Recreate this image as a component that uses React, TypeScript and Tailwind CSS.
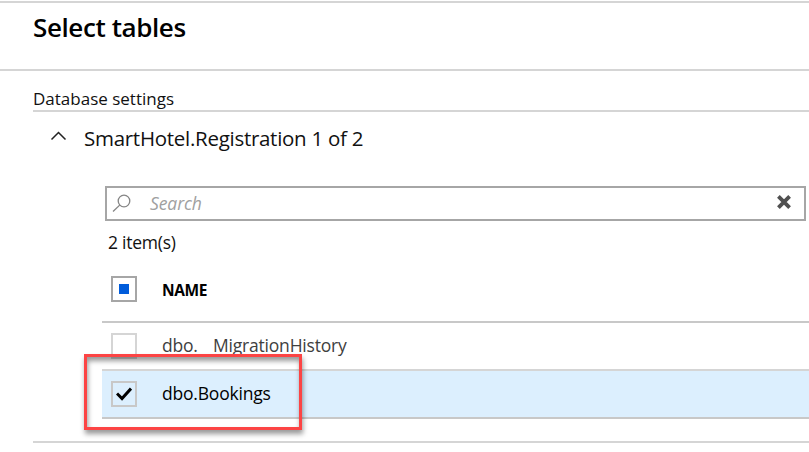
import type { ReactNode } from "react";

function Box({ children, tone }: { children?: ReactNode; tone: string }) {
  return (
    <span className={`flex h-[26px] w-[26px] shrink-0 items-center justify-center border-2 ${tone}`}>
      {children}
    </span>
  );
}

export default function App() {
  return (
    <main className="relative h-[452px] w-[809px] overflow-hidden bg-white pt-px font-['Open_Sans','Noto_Sans',sans-serif] whitespace-pre text-[#111]">
      <header className="h-[70px] border-y-2 border-[#d5d5d5] pl-[33px]">
        <h1 className="pt-[6px] text-[26px] leading-[36px] font-semibold tracking-[-0.4px] text-black">Select tables</h1>
      </header>
      <section className="ml-[33px] h-[372px] border-b-2 border-[#d5d5d5]">
        <h2 className="h-[41px] border-b-2 border-[#d5d5d5] pt-[16px] text-[17px] leading-[24px]">Database settings</h2>
        <div className="flex h-[74px] pl-[17px]">
          <svg className="mt-[19px] h-[10px] w-[17px]" viewBox="0 0 17 10" fill="none" stroke="#222" strokeWidth="1.5">
            <path d="M1.5 8.5 8.5 1.5 15.5 8.5" />
          </svg>
          <h3 className="ml-[17px] pt-[11px] text-[20.5px] leading-[30px] tracking-[-0.28px]">SmartHotel.Registration 1 of 2</h3>
        </div>
        <div className="ml-[72px] flex h-[35px] w-[701px] items-center border-2 border-[#a6a6a6] text-[17.5px] text-[#a0a0a0] italic">
          <svg className="ml-[5px] h-[20px] w-[20px]" viewBox="0 0 20 20" fill="none" stroke="#858585" strokeWidth="1.3">
            <circle cx="12" cy="7" r="5.8" />
            <path d="M7.7 11.1 1 17.5" />
          </svg>
          <span className="ml-[18px] grow pb-[2px] leading-[24px] tracking-[-0.1px]">Search</span>
          <svg className="mr-[13px] mb-[3px] h-[14px] w-[14px]" viewBox="0 0 14 14" stroke="#505050" strokeWidth="3.8">
            <path d="M1.4 1.4 12.6 12.6M12.6 1.4 1.4 12.6" />
          </svg>
        </div>
        <p className="ml-[75px] h-[48px] pt-[9px] text-[17.5px] leading-[24px] tracking-[-0.25px]">2 item(s)</p>
        <div className="ml-[69px] text-[17.5px]">
          <div className="flex h-[54px] items-start border-b-2 border-[#c8c8c8] pt-[7px] pl-[9px]">
            <Box tone="border-[#a6a6a6]">
              <i className="h-[10px] w-[10px] bg-[#005cdb]" />
            </Box>
            <b className="ml-[25px] pt-px text-[15.5px] leading-[27px] tracking-[-0.4px] text-black">NAME</b>
          </div>
          <div className="flex h-[48px] items-center border-b-2 border-[#d5d5d5] pl-[9px] text-[#404040]">
            <Box tone="border-[#d5d5d5]" />
            <span className="ml-[25px] w-[51px] pb-[2px] leading-[24px] tracking-[-0.2px]">dbo.</span>
            <span className="pb-[2px] leading-[24px] tracking-[-0.2px]">MigrationHistory</span>
          </div>
          <div className="flex h-[48px] items-center border-b-2 border-[#c8c8c8] bg-[#dceffe] pl-[9px] text-black">
            <Box tone="border-[#c8c8c8]">
              <svg className="h-[14px] w-[16px]" viewBox="0 0 16 14" fill="none" stroke="#000" strokeWidth="3">
                <path d="M1 6.5 6 11.5 15 1.5" />
              </svg>
            </Box>
            <span className="ml-[25px] pb-[2px] leading-[24px] tracking-[-0.2px]">dbo.Bookings</span>
          </div>
        </div>
      </section>
      <div className="absolute top-[354px] left-[84px] h-[76px] w-[218px] border-3 border-[#fc4444] shadow-[1px_4px_5px_rgba(0,0,0,0.4),inset_1px_4px_5px_rgba(0,0,0,0.4)]" />
    </main>
  );
}
